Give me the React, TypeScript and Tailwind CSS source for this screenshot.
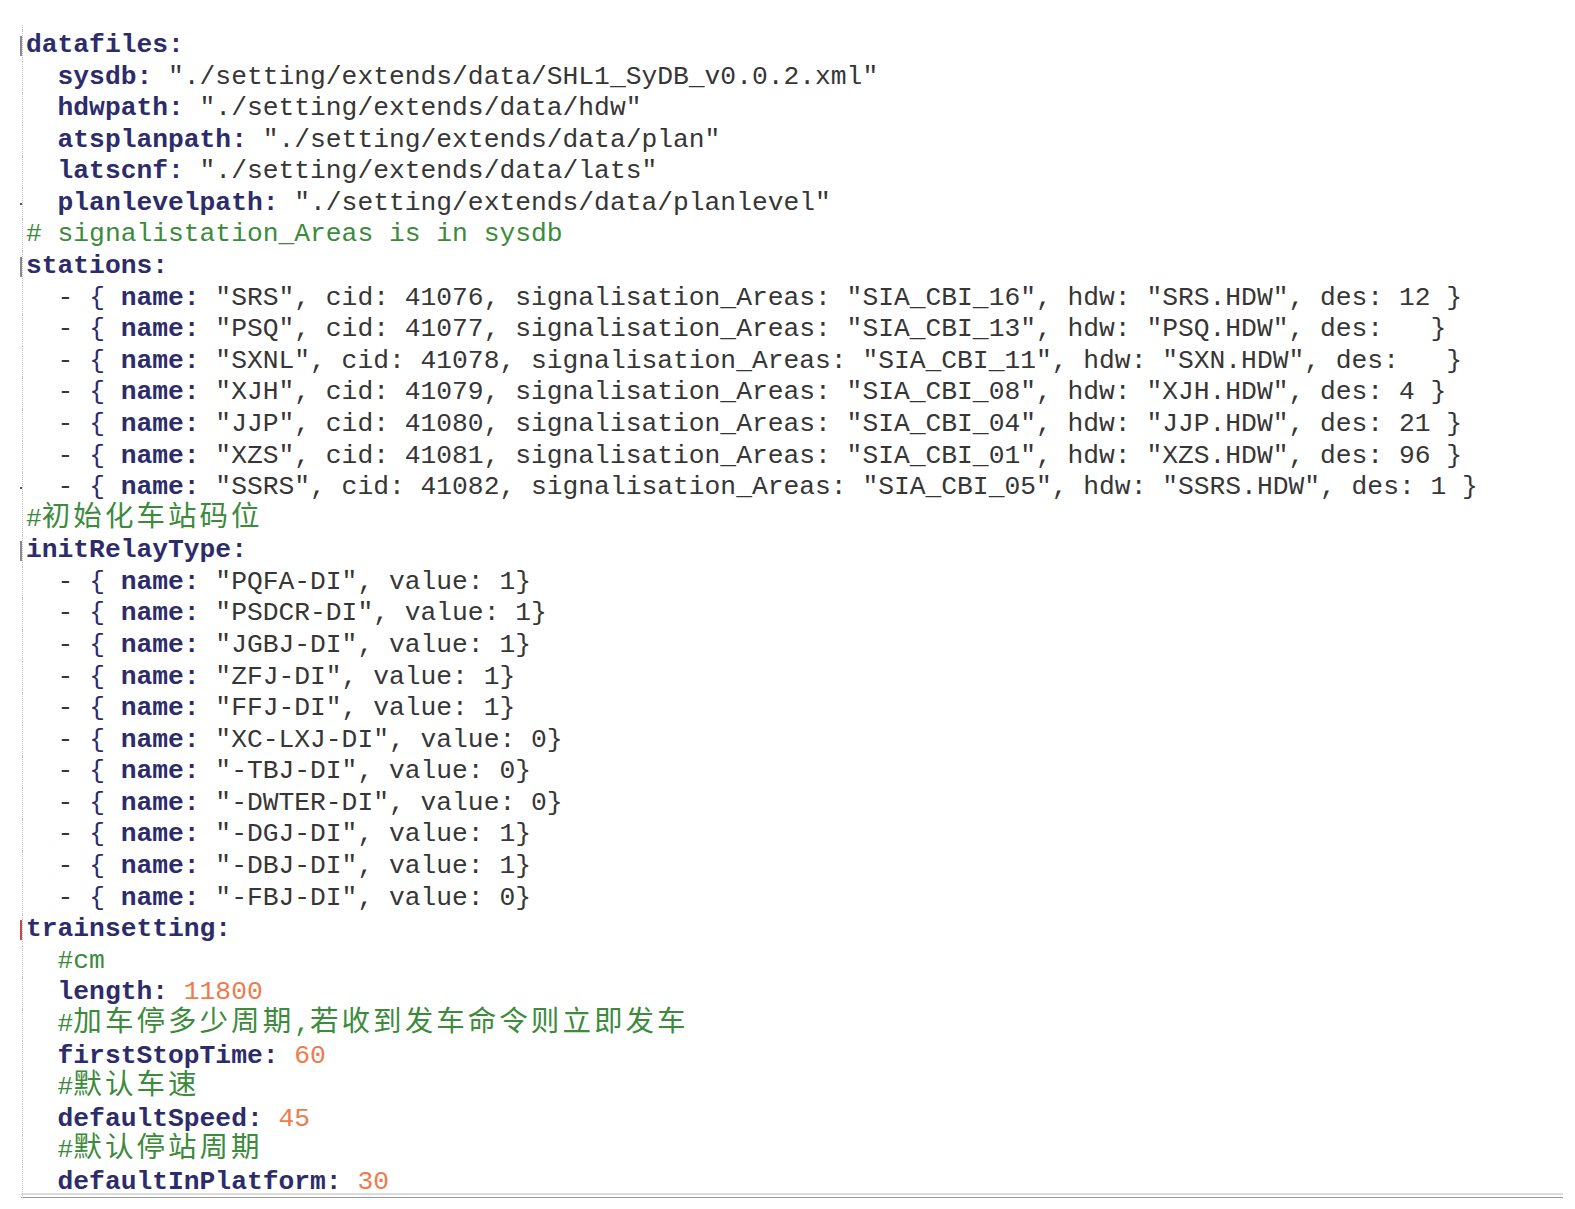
import React from 'react';

type Kind = 'k' | 's' | 'c' | 'n' | 'b';
type Seg = [string, Kind];

const kindClass: Record<Kind, string> = {
  k: 'font-bold text-[#2c2c6c]',
  b: 'text-[#2c2c6c]',
  s: 'text-[#363636]',
  c: 'text-[#3b8b3b]',
  n: 'text-[#f07a4c]',
};

const stations: [string, string, string, string, string][] = [
  ['SRS', '41076', '16', 'SRS.HDW', ' 12'],
  ['PSQ', '41077', '13', 'PSQ.HDW', '  '],
  ['SXNL', '41078', '11', 'SXN.HDW', '  '],
  ['XJH', '41079', '08', 'XJH.HDW', ' 4'],
  ['JJP', '41080', '04', 'JJP.HDW', ' 21'],
  ['XZS', '41081', '01', 'XZS.HDW', ' 96'],
  ['SSRS', '41082', '05', 'SSRS.HDW', ' 1'],
];

const relays: [string, string][] = [
  ['PQFA-DI', '1'],
  ['PSDCR-DI', '1'],
  ['JGBJ-DI', '1'],
  ['ZFJ-DI', '1'],
  ['FFJ-DI', '1'],
  ['XC-LXJ-DI', '0'],
  ['-TBJ-DI', '0'],
  ['-DWTER-DI', '0'],
  ['-DGJ-DI', '1'],
  ['-DBJ-DI', '1'],
  ['-FBJ-DI', '0'],
];

const path = (key: string, val: string): Seg[] => [
  ['  ', 's'],
  [key + ':', 'k'],
  [' "./setting/extends/data/' + val + '"', 's'],
];

const lines: Seg[][] = [
  [['datafiles:', 'k']],
  path('sysdb', 'SHL1_SyDB_v0.0.2.xml'),
  path('hdwpath', 'hdw'),
  path('atsplanpath', 'plan'),
  path('latscnf', 'lats'),
  path('planlevelpath', 'planlevel'),
  [['# signalistation_Areas is in sysdb', 'c']],
  [['stations:', 'k']],
  ...stations.map(([name, cid, cbi, hdw, des]): Seg[] => [
    ['  - ', 's'],
    ['{', 'b'],
    [' name:', 'k'],
    [` "${name}", cid: ${cid}, signalisation_Areas: "SIA_CBI_${cbi}", hdw: "${hdw}", des:${des} }`, 's'],
  ]),
  [['#初始化车站码位', 'c']],
  [['initRelayType:', 'k']],
  ...relays.map(([name, v]): Seg[] => [
    ['  - ', 's'],
    ['{', 'b'],
    [' name:', 'k'],
    [` "${name}", value: ${v}}`, 's'],
  ]),
  [['trainsetting:', 'k']],
  [['  #cm', 'c']],
  [['  ', 's'], ['length:', 'k'], [' ', 's'], ['11800', 'n']],
  [['  #加车停多少周期,若收到发车命令则立即发车', 'c']],
  [['  ', 's'], ['firstStopTime:', 'k'], [' ', 's'], ['60', 'n']],
  [['  #默认车速', 'c']],
  [['  ', 's'], ['defaultSpeed:', 'k'], [' ', 's'], ['45', 'n']],
  [['  #默认停站周期', 'c']],
  [['  ', 's'], ['defaultInPlatform:', 'k'], [' ', 's'], ['30', 'n']],
];

// fold marks in the left margin
const markers: Record<number, string> = {
  0: 'h-[20px] bg-[#8a8a8a]',
  5: 'h-[2px] bg-[#555]',
  7: 'h-[20px] bg-[#8a8a8a]',
  14: 'h-[2px] bg-[#555]',
  16: 'h-[20px] bg-[#8a8a8a]',
  28: 'h-[20px] bg-[#c84848]',
};

function renderText(text: string) {
  const parts = text.split(/([\u4e00-\u9fff]+)/);
  return parts.map((p, i) =>
    /[\u4e00-\u9fff]/.test(p) ? (
      <span
        key={i}
        className="font-['Noto_Sans_CJK_SC',sans-serif] text-[28.5px] leading-[20px] tracking-[3.05px]"
      >
        {p}
      </span>
    ) : (
      <span key={i}>{p}</span>
    )
  );
}

export default function App() {
  return (
    <div className="min-h-screen w-full bg-white pt-[25px]">
      <div className="ml-[20px] flex h-[1168px] flex-col">
        <div className="ml-[2px] h-[5px] shrink-0 border-l border-dotted border-[#c4c4c4]" />
        {lines.map((segs, i) => (
          <div key={i} className="flex h-[31.59px] shrink-0 items-center">
            <div className="flex w-[2px] items-center">
              {markers[i] && <span className={`w-[1.5px] ${markers[i]}`} />}
            </div>
            <div className="flex-1 self-stretch whitespace-pre border-l border-dotted border-[#c4c4c4] pl-[3px] font-['Liberation_Mono',monospace] text-[26.3px] leading-[31.59px]">
              {segs.map(([t, k], j) => (
                <span key={j} className={kindClass[k]}>
                  {k === 'c' ? renderText(t) : t}
                </span>
              ))}
            </div>
          </div>
        ))}
      </div>
      <div className="ml-[21px] h-[5px] w-[1542px] border-t-2 border-b border-t-[#dcdcdc] border-b-[#9a9a9a]" />
    </div>
  );
}
